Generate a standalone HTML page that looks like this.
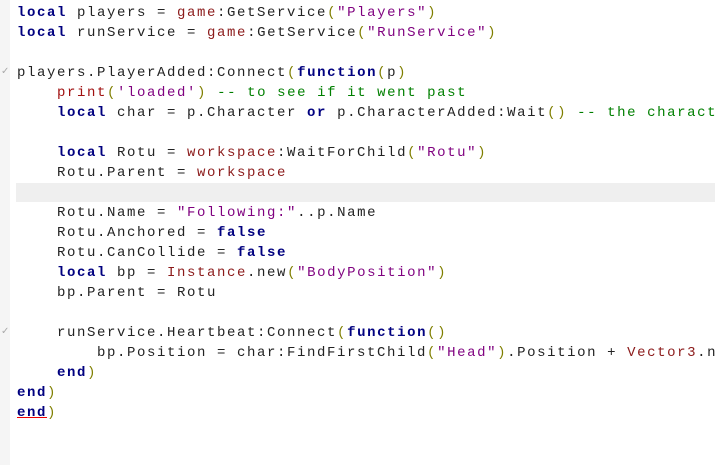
<!DOCTYPE html>
<html><head><style>
body{margin:0;width:715px;height:465px;background:#fff;overflow:hidden;position:relative;font-family:"Liberation Mono","Courier New",monospace;font-size:14px;letter-spacing:1.6px;}
.g{position:absolute;left:0;top:0;width:10px;height:465px;background:#f5f5f5;}
.l{position:absolute;left:17px;height:20px;line-height:20px;white-space:pre;color:#222;}
.hl{position:absolute;left:16px;top:183px;width:699px;height:19px;background:#efefef;}
.k{color:#00007f;font-weight:bold;letter-spacing:1.6px}
.s{color:#7f007f}
.gl{color:#8b1a1a}
.c{color:#007f00}
.p{color:#7f7f00}
.r{color:#a01010}
.ck{position:absolute;left:1px;color:#aaa;font-size:10px;letter-spacing:0;font-family:"DejaVu Sans",sans-serif}
</style></head><body>
<div class="g"></div>
<div class="hl"></div>
<div class="ck" style="top:66px">✓</div>
<div class="ck" style="top:326px">✓</div>
<div class="l" style="top:3px"><span class="k">local</span> players = <span class="gl">game</span>:GetService<span class="p">(</span><span class="s">"Players"</span><span class="p">)</span></div>
<div class="l" style="top:23px"><span class="k">local</span> runService = <span class="gl">game</span>:GetService<span class="p">(</span><span class="s">"RunService"</span><span class="p">)</span></div>
<div class="l" style="top:63px">players.PlayerAdded:Connect<span class="p">(</span><span class="k">function</span><span class="p">(</span>p<span class="p">)</span></div>
<div class="l" style="top:83px;left:57px"><span class="r">print</span><span class="p">(</span><span class="s">'loaded'</span><span class="p">)</span> <span class="c">-- to see if it went past</span></div>
<div class="l" style="top:103px;left:57px"><span class="k">local</span> char = p.Character <span class="k">or</span> p.CharacterAdded:Wait<span class="p">()</span> <span class="c">-- the character</span></div>
<div class="l" style="top:143px;left:57px"><span class="k">local</span> Rotu = <span class="gl">workspace</span>:WaitForChild<span class="p">(</span><span class="s">"Rotu"</span><span class="p">)</span></div>
<div class="l" style="top:163px;left:57px">Rotu.Parent = <span class="gl">workspace</span></div>
<div class="l" style="top:203px;left:57px">Rotu.Name = <span class="s">"Following:"</span>..p.Name</div>
<div class="l" style="top:223px;left:57px">Rotu.Anchored = <span class="k">false</span></div>
<div class="l" style="top:243px;left:57px">Rotu.CanCollide = <span class="k">false</span></div>
<div class="l" style="top:263px;left:57px"><span class="k">local</span> bp = <span class="gl">Instance</span>.new<span class="p">(</span><span class="s">"BodyPosition"</span><span class="p">)</span></div>
<div class="l" style="top:283px;left:57px">bp.Parent = Rotu</div>
<div class="l" style="top:323px;left:57px">runService.Heartbeat:Connect<span class="p">(</span><span class="k">function</span><span class="p">()</span></div>
<div class="l" style="top:343px;left:97px">bp.Position = char:FindFirstChild<span class="p">(</span><span class="s">"Head"</span><span class="p">)</span>.Position + <span class="gl">Vector3</span>.new</div>
<div class="l" style="top:363px;left:57px"><span class="k">end</span><span class="p">)</span></div>
<div class="l" style="top:383px"><span class="k">end</span><span class="p">)</span></div>
<div class="l" style="top:403px"><span class="k" style="text-decoration:underline;text-decoration-color:#e00">end</span><span class="p">)</span></div>
</body></html>
